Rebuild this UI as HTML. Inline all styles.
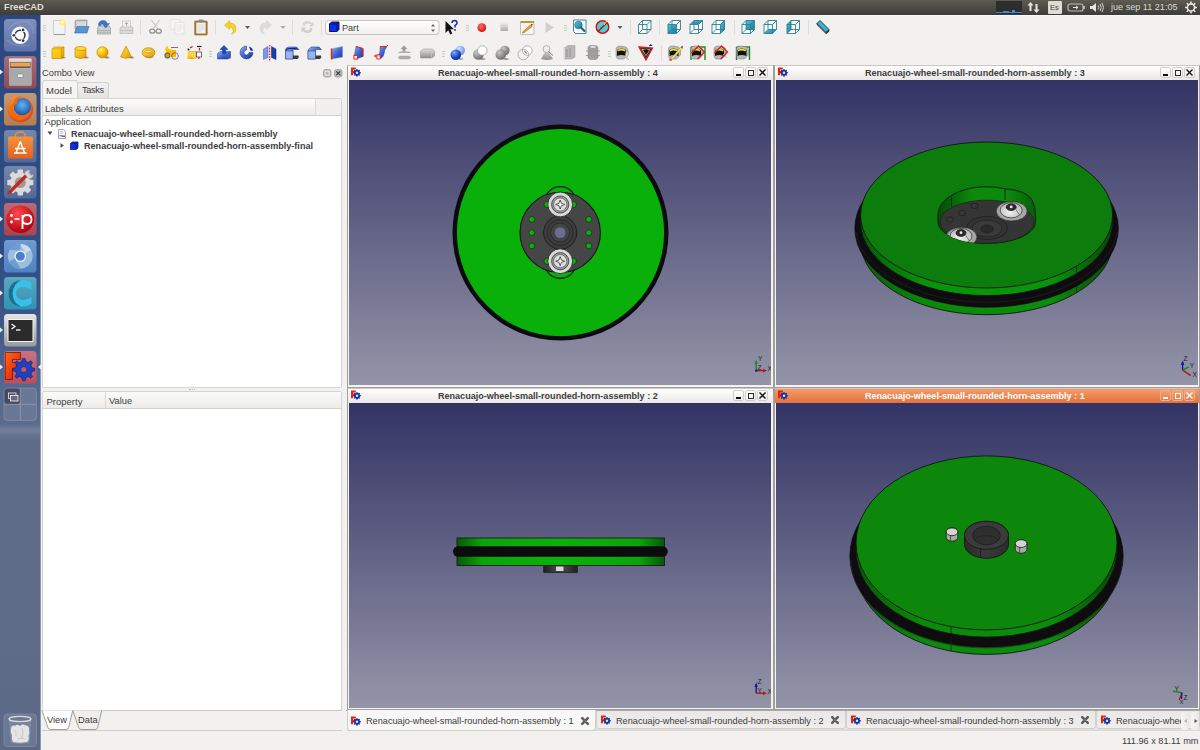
<!DOCTYPE html>
<html><head><meta charset="utf-8">
<style>
*{margin:0;padding:0;box-sizing:border-box}
html,body{width:1200px;height:750px;overflow:hidden;background:#f2f1f0;font-family:"Liberation Sans",sans-serif;color:#3c3c3c}
.a{position:absolute}
.t{position:absolute;white-space:nowrap;line-height:1}
#panel{left:0;top:0;width:1200px;height:15px;background:linear-gradient(#5e5b52,#3d3c38)}
#launcher{left:0;top:15px;width:41px;height:735px;background:linear-gradient(#2b4980 0%,#2f4d85 33%,#3d5888 42%,#526890 50%,#5f6d8b 58%,#5f6d8a 80%,#5b6986 100%)}
.vp{position:absolute;background:linear-gradient(#333365,#9494a8)}
.frame{position:absolute;background:#f4f3f2;border:1px solid #a09f9c}
.tb{position:absolute;left:0;right:0;top:0;height:14px;background:linear-gradient(#ffffff,#e9e8e6)}
.tb.act{background:linear-gradient(#f69a68,#e5713c)}
.ttl{position:absolute;top:3px;font-size:9.05px;font-weight:bold;color:#3c3c3c;white-space:nowrap;line-height:1}
.act .ttl{color:#fff}
.wb{position:absolute;top:1px;width:11px;height:11px;border:1px solid #cfcecb;border-radius:2px;background:linear-gradient(#fff,#f1f0ee)}
.act .wb{border-color:#f0b090;background:linear-gradient(#f9a070,#ea7a46)}

.gm{position:absolute;left:2px;top:6.2px;width:5px;height:1.5px;background:#111}
.gx{position:absolute;left:1.8px;top:2px;width:6px;height:5.5px;border:1.4px solid #2a2a2a}
.gc{position:absolute;left:0px;top:0.3px;color:#111}
.act .gm{background:#fff}.act .gx{border-color:#fff}.act .gc{color:#fff}
.frame{border-top-color:#c9c8c5}

</style></head>
<body>
<div id="panel" class="a">
  <div class="t" style="left:4px;top:3px;font-size:9.3px;font-weight:bold;color:#e2ded6">FreeCAD</div>
  <div class="a" style="left:996px;top:1px;width:26px;height:13px;background:#2d2d2b"></div>
  <div class="a" style="left:996px;top:12px;width:26px;height:1px;background:#3a8ae0"></div>
  <div class="a" style="left:1003px;top:11px;width:6px;height:1px;background:#3a8ae0"></div>
  <div class="a" style="left:1012px;top:10px;width:3px;height:2px;background:#3a8ae0"></div>
  <svg class="a" style="left:1026px;top:1px" width="16" height="13" viewBox="0 0 16 13">
    <path d="M4.5 1 L1.5 4.5 H3.5 V10 H5.5 V4.5 H7.5 Z" fill="#e8e5df"/>
    <path d="M10.5 12 L7.5 8.5 H9.5 V3 H11.5 V8.5 H13.5 Z" fill="#e8e5df"/>
  </svg>
  <div class="a" style="left:1048px;top:1px;width:14px;height:13px;background:#dedbd5;border-radius:1px"></div>
  <div class="t" style="left:1050px;top:4px;font-size:7.5px;color:#3c3b37">Es</div>
  <svg class="a" style="left:1067px;top:2px" width="19" height="11" viewBox="0 0 19 11">
    <rect x="1" y="2" width="15" height="7" rx="2" fill="none" stroke="#bdbab3" stroke-width="1.2"/>
    <rect x="16" y="4" width="2" height="3" fill="#bdbab3"/>
    <path d="M6 5.5 H11 M9 3.8 L11 5.5 L9 7.2" stroke="#e8e5df" stroke-width="1" fill="none"/>
  </svg>
  <svg class="a" style="left:1089px;top:1px" width="16" height="13" viewBox="0 0 16 13">
    <path d="M1 5 H3.5 L7 2 V11 L3.5 8 H1 Z" fill="#e8e5df"/>
    <path d="M9 4.5 Q10.5 6.5 9 8.5 M11 3 Q13.5 6.5 11 10 M13 1.8 Q16 6.5 13 11.2" stroke="#d8d5cf" stroke-width="1" fill="none"/>
  </svg>
  <div class="t" style="left:1111px;top:3px;font-size:9.1px;color:#dcd8d0">jue sep 11 21:05</div>
  <svg class="a" style="left:1184px;top:1px" width="14" height="13" viewBox="0 0 14 13">
    <circle cx="7" cy="6.5" r="3.6" fill="none" stroke="#e8e5df" stroke-width="1.6"/>
    <path d="M7 0.5V2.6M7 10.4V12.5M1 6.5H3.1M10.9 6.5H13M2.8 2.3L4.3 3.8M9.7 9.2L11.2 10.7M2.8 10.7L4.3 9.2M9.7 3.8L11.2 2.3" stroke="#e8e5df" stroke-width="1.6"/>
  </svg>
</div>
<div id="launcher" class="a"></div>
<div class="a" style="left:0;top:424px;width:40px;height:16px;background:linear-gradient(rgba(255,255,255,0) 0%,rgba(200,205,220,0.22) 45%,rgba(255,255,255,0.08) 60%,rgba(255,255,255,0) 100%)"></div>
<div class="a" style="left:40px;top:15px;width:1px;height:735px;background:#8f9bb3"></div>
<div class="a" style="left:41px;top:15px;width:1159px;height:1px;background:#f9f8f7"></div>

<svg class="a" style="left:0;top:15px" width="41" height="735" viewBox="0 15 41 735">
<defs>
  <linearGradient id="tileg" x1="0" y1="0" x2="0" y2="1"><stop offset="0" stop-color="#fff" stop-opacity="0.22"/><stop offset="1" stop-color="#fff" stop-opacity="0.02"/></linearGradient>
  <radialGradient id="ffx" cx="0.45" cy="0.4" r="0.6"><stop offset="0" stop-color="#ffd23a"/><stop offset="0.55" stop-color="#f58a1e"/><stop offset="1" stop-color="#d8401a"/></radialGradient>
  <radialGradient id="ffglobe" cx="0.5" cy="0.4" r="0.6"><stop offset="0" stop-color="#5fb6f0"/><stop offset="1" stop-color="#1e4fa8"/></radialGradient>
  <radialGradient id="redball" cx="0.4" cy="0.3" r="0.7"><stop offset="0" stop-color="#ff4a4a"/><stop offset="1" stop-color="#b00010"/></radialGradient>
  <linearGradient id="termg" x1="0" y1="0" x2="0" y2="1"><stop offset="0" stop-color="#e6e6e6"/><stop offset="1" stop-color="#9a9a9a"/></linearGradient>
  <linearGradient id="bagg" x1="0" y1="0" x2="0" y2="1"><stop offset="0" stop-color="#f5923e"/><stop offset="1" stop-color="#e2601e"/></linearGradient>
  <linearGradient id="fcF" x1="0" y1="0" x2="1" y2="1"><stop offset="0" stop-color="#ff6a1a"/><stop offset="1" stop-color="#d81808"/></linearGradient>
  <radialGradient id="trashg" cx="0.5" cy="0.3" r="0.7"><stop offset="0" stop-color="#fafafa"/><stop offset="1" stop-color="#b8b8b8"/></radialGradient>
</defs>
<!-- tiles -->
<g>
  <!-- 1 ubuntu -->
  <rect x="4" y="19" width="32.5" height="32.5" rx="3.5" fill="#5b70a9"/>
  <rect x="4" y="19" width="32.5" height="32.5" rx="3.5" fill="url(#tileg)"/>
  <path d="M8 30 Q14 20 28 22 Q34 26 33 33" fill="none" stroke="#8fa0cc" stroke-width="1.2" opacity="0.6"/>
  <path d="M7 40 Q15 48 30 45" fill="none" stroke="#8fa0cc" stroke-width="1.2" opacity="0.5"/>
  <circle cx="20.1" cy="35.3" r="8.7" fill="#fdfdfd"/>
  <circle cx="20" cy="35.3" r="5" fill="none" stroke="#2a3550" stroke-width="1.5"/>
  <circle cx="13.8" cy="35.3" r="2.2" fill="#fdfdfd"/><circle cx="23.1" cy="29.9" r="2.2" fill="#fdfdfd"/><circle cx="23.1" cy="40.7" r="2.2" fill="#fdfdfd"/>
  <circle cx="13.8" cy="35.3" r="1.35" fill="#2a3550"/><circle cx="23.1" cy="29.9" r="1.35" fill="#2a3550"/><circle cx="23.1" cy="40.7" r="1.35" fill="#2a3550"/>
  <!-- 2 files -->
  <rect x="4" y="56" width="32.5" height="32.5" rx="3.5" fill="#8d4556"/>
  <rect x="4" y="56" width="32.5" height="32.5" rx="3.5" fill="url(#tileg)"/>
  <rect x="9" y="58.5" width="22.5" height="27" rx="1.5" fill="#bdbdbd"/>
  <rect x="9" y="58.5" width="22.5" height="3" fill="#dcdcdc"/>
  <rect x="10" y="62" width="20.5" height="6" fill="#5a5a5a"/>
  <rect x="10.5" y="62.5" width="19.5" height="4" fill="#f0a050"/>
  <rect x="9" y="68.5" width="22.5" height="17" fill="#a9a9a9"/>
  <rect x="17.5" y="74" width="5.5" height="3.5" rx="0.5" fill="#eeeeee" stroke="#777" stroke-width="0.6"/>
  <!-- 3 firefox -->
  <rect x="4" y="93" width="32.5" height="32.5" rx="3.5" fill="#b07c52"/>
  <rect x="4" y="93" width="32.5" height="32.5" rx="3.5" fill="url(#tileg)"/>
  <circle cx="20.3" cy="109.5" r="12.8" fill="url(#ffx)"/>
  <circle cx="22.3" cy="106.8" r="8.8" fill="url(#ffglobe)"/>
  <path d="M13 103 Q15 97 21 96.5 Q16 100 17 104 Q14 104 13.5 108 Q14 114 20 115.5 Q26 116 29.5 111.5 Q28 119 20 120 Q11 119 9.5 111 Q9 106 13 103 Z" fill="#f06a14"/>
  <path d="M10 100 Q12 96 15 95.5 L14 99 Z" fill="#f89030"/>
  <!-- 4 software center -->
  <rect x="4" y="130" width="32.5" height="32.5" rx="3.5" fill="#4f6592"/>
  <rect x="4" y="130" width="32.5" height="32.5" rx="3.5" fill="url(#tileg)"/>
  <path d="M15 137 Q15 132 20.3 132 Q25.5 132 25.5 137" fill="none" stroke="#f08a3a" stroke-width="1.4"/>
  <rect x="8" y="136.5" width="25" height="22" rx="1" fill="url(#bagg)"/>
  <path d="M20.3 141.5 L16 153 M20.3 141.5 L24.6 153 M15 148.5 H25.6 M14 153 H26.6" stroke="#fff" stroke-width="1.4" fill="none"/>
  <!-- 5 settings -->
  <rect x="4" y="166" width="32.5" height="32.5" rx="3.5" fill="#4f6592"/>
  <rect x="4" y="166" width="32.5" height="32.5" rx="3.5" fill="url(#tileg)"/>
  <g transform="translate(20.3 182.5)">
    <circle r="10" fill="#dadada"/>
    <path d="M-2.5 -13 H2.5 L3 -9 H-3 Z M-2.5 13 H2.5 L3 9 H-3 Z M-13 -2.5 V2.5 L-9 3 V-3 Z M13 -2.5 V2.5 L9 3 V-3 Z" fill="#dadada"/>
    <path d="M-2.5 -13 H2.5 L3 -9 H-3 Z M-2.5 13 H2.5 L3 9 H-3 Z M-13 -2.5 V2.5 L-9 3 V-3 Z M13 -2.5 V2.5 L9 3 V-3 Z" fill="#dadada" transform="rotate(45)"/>
    <circle r="5.5" fill="#9a9a9a"/>
    <path d="M-11 10 L6 -7" stroke="#c02a20" stroke-width="3.4" stroke-linecap="round"/>
    <path d="M4 -9 Q6 -13 10 -12 L8 -9 L10 -7 L13 -8 Q13 -4 8 -4 Z" fill="#d8d8d8" stroke="#999" stroke-width="0.5"/>
  </g>
  <!-- 6 :-p -->
  <rect x="4" y="203" width="32.5" height="32.5" rx="3.5" fill="#a8404c"/>
  <rect x="4" y="203" width="32.5" height="32.5" rx="3.5" fill="url(#tileg)"/>
  <circle cx="20.3" cy="219.3" r="13.8" fill="url(#redball)"/>
  <circle cx="11.5" cy="215.5" r="1.4" fill="#fff"/><circle cx="11.5" cy="222" r="1.4" fill="#fff"/>
  <path d="M14.5 219 H19.5" stroke="#fff" stroke-width="1.6"/>
  <path d="M22.5 215 V229 M22.5 219.5 Q22.5 215 27 215 Q31.5 215 31.5 219.5 Q31.5 224 27 224 Q22.5 224 22.5 219.5" fill="none" stroke="#fff" stroke-width="1.8"/>
  <!-- 7 chromium -->
  <rect x="4" y="240" width="32.5" height="32.5" rx="3.5" fill="#4a7fc0"/>
  <rect x="4" y="240" width="32.5" height="32.5" rx="3.5" fill="url(#tileg)"/>
  <circle cx="20.3" cy="256.3" r="12.3" fill="#9dbde0"/>
  <path d="M20.3 244 A12.3 12.3 0 0 1 31 250 L25.5 253 Z" fill="#c8dcef"/>
  <path d="M9.5 250 A12.3 12.3 0 0 1 20.3 244 L20.3 250.5 Z" fill="#6e9bd0"/>
  <path d="M20.3 268.6 A12.3 12.3 0 0 1 9.3 261.5 L14.8 258.5 Z" fill="#6e9bd0"/>
  <circle cx="20.3" cy="256.3" r="5.8" fill="#eaf2fb"/>
  <circle cx="20.3" cy="256.3" r="4.5" fill="#4a80c8"/>
  <!-- 8 C -->
  <rect x="4" y="277" width="32.5" height="32.5" rx="3.5" fill="#2d8fb0"/>
  <rect x="4" y="277" width="32.5" height="32.5" rx="3.5" fill="url(#tileg)"/>
  <path d="M31.5 283 Q27 279.5 21 280 Q9 281.5 8.5 293.5 Q9 305.5 21 306.5 Q27 307 31.5 303.5 L31.5 297 Q27 300 23 300 Q16 299 16 293.5 Q16 287.5 23 287 Q27 287 31.5 290 Z" fill="#39c0ea"/>
  <path d="M21 280 Q9 281.5 8.5 293.5 Q9 305.5 21 306.5 Q13 303 12.5 293.5 Q13 284 21 280 Z" fill="#1d6f8c"/>
  <!-- 9 terminal -->
  <rect x="4" y="314" width="32.5" height="32.5" rx="3.5" fill="url(#termg)"/>
  <rect x="7.5" y="319" width="26" height="23" rx="1" fill="#f4f4f4"/>
  <rect x="8.5" y="320" width="24" height="21" fill="#2a2a2a"/>
  <path d="M11.5 324 L15 326.5 L11.5 329" fill="none" stroke="#fff" stroke-width="1.3"/>
  <path d="M16 330 H20.5" stroke="#fff" stroke-width="1.3"/>
  <!-- 10 freecad -->
  <rect x="4" y="351" width="32.5" height="32.5" rx="3.5" fill="#bb4a5a"/>
  <rect x="4" y="351" width="32.5" height="32.5" rx="3.5" fill="url(#tileg)"/>
  <path d="M5.3 352.5 H20.5 V359.5 H12.5 V362.5 H17 V368.5 H12.5 V379.5 H5.3 Z" fill="url(#fcF)" stroke="#601000" stroke-width="0.7"/>
  <g transform="translate(23.8 369.5) scale(0.84)">
    <path d="M-1.6 -11.5 H1.6 L2.3 -8 L5.3 -6.5 L8.3 -8.7 L10.5 -6.5 L8.5 -3.6 L9.6 -0.5 L13 0.2 V3.3 L9.6 4 L8.5 7 L10.5 10 L8.3 12.2 L5.3 10 L2.3 11.5 L1.6 15 H-1.6 L-2.3 11.5 L-5.3 10 L-8.3 12.2 L-10.5 10 L-8.5 7 L-9.6 4 L-13 3.3 V0.2 L-9.6 -0.5 L-8.5 -3.6 L-10.5 -6.5 L-8.3 -8.7 L-5.3 -6.5 L-2.3 -8 Z" fill="#2040c0" stroke="#0c1a70" stroke-width="0.7" transform="translate(0 -1.7)"/>
    <circle cx="0" cy="0" r="3.6" fill="#bd5a66" stroke="#0c1a70" stroke-width="0.6"/>
  </g>
  <!-- 11 workspaces -->
  <rect x="4" y="388" width="32.5" height="32.5" rx="3.5" fill="#6a7896" stroke="#8895b0" stroke-width="0.6"/>
  <rect x="4.5" y="388.5" width="15.5" height="15.5" rx="3" fill="#4a4860"/>
  <path d="M20.3 388.5 V420.5 M4.5 404.3 H36" stroke="#8e9ab4" stroke-width="0.8"/>
  <rect x="8.5" y="393" width="7.5" height="5.5" fill="none" stroke="#ddd" stroke-width="0.9"/>
  <rect x="10.5" y="395.5" width="7.5" height="5.5" fill="#6a6880" stroke="#eee" stroke-width="0.9"/>
  <!-- trash -->
  <rect x="4" y="714" width="32.5" height="32.5" rx="3.5" fill="#ffffff" fill-opacity="0.1" stroke="#8c96ae" stroke-width="0.6"/>
  <path d="M9.5 720 L11.5 742.5 Q20 744.5 29 742.5 L30.5 720" fill="#ffffff" fill-opacity="0.08" stroke="#9aa2b4" stroke-width="0.5"/>
  <ellipse cx="20" cy="719" rx="11" ry="2.6" fill="none" stroke="#dcdcdc" stroke-width="1.3"/>
  <path d="M11 728 Q12 724.5 15 726 Q17 723.5 20 726 Q23 723.5 25.5 725.5 Q29 725 29 729 Q30 733 28.5 736 Q29.5 740 27 742 Q20 743.5 13 742 Q11 739 12 735.5 Q10 732 11 728 Z" fill="#e4e4e4"/>
  <path d="M14 730 Q17 732 16 736 M22 728 Q24 733 22 738 M18 739 Q21 737 25 739" stroke="#bdbdbd" stroke-width="0.7" fill="none"/>
</g>
<!-- pips -->
<g fill="#eeeeee">
  <path d="M0 69.5 L3 72 L0 74.5 Z"/>
  <path d="M0 106.5 L3 109 L0 111.5 Z"/>
  <path d="M0 216.5 L3 219 L0 221.5 Z"/>
  <path d="M0 253.5 L3 256 L0 258.5 Z"/>
  <path d="M0 290.5 L3 293 L0 295.5 Z"/>
  <path d="M0 327.5 L3 330 L0 332.5 Z"/>
  <path d="M0 364.5 L3 367 L0 369.5 Z"/>
  <path d="M41 364.5 L38 367 L41 369.5 Z"/>
</g>
</svg>

<svg class="a" style="left:0;top:0" width="900" height="65" viewBox="0 0 900 65"><defs>
<linearGradient id="ygold" x1="0" y1="0" x2="1" y2="1"><stop offset="0" stop-color="#ffe23a"/><stop offset="1" stop-color="#e89a00"/></linearGradient>
<radialGradient id="ysph" cx="0.35" cy="0.3" r="0.75"><stop offset="0" stop-color="#fff36a"/><stop offset="0.5" stop-color="#ffc400"/><stop offset="1" stop-color="#d88a00"/></radialGradient>
<linearGradient id="bblue" x1="0" y1="0" x2="1" y2="1"><stop offset="0" stop-color="#9ab4f0"/><stop offset="0.5" stop-color="#3f66d0"/><stop offset="1" stop-color="#1a3496"/></linearGradient>
<radialGradient id="bsph" cx="0.35" cy="0.3" r="0.75"><stop offset="0" stop-color="#7ab0ff"/><stop offset="0.6" stop-color="#1a4ec8"/><stop offset="1" stop-color="#0a2680"/></radialGradient>
<radialGradient id="lbsph" cx="0.35" cy="0.3" r="0.75"><stop offset="0" stop-color="#d0e0ff"/><stop offset="1" stop-color="#6a8ae0"/></radialGradient>
<radialGradient id="gsph" cx="0.35" cy="0.3" r="0.75"><stop offset="0" stop-color="#c8c8c8"/><stop offset="1" stop-color="#6a6a6a"/></radialGradient>
<linearGradient id="ggray" x1="0" y1="0" x2="0" y2="1"><stop offset="0" stop-color="#e0e0e0"/><stop offset="1" stop-color="#8e8e8e"/></linearGradient>
<linearGradient id="teal" x1="0" y1="0" x2="1" y2="1"><stop offset="0" stop-color="#5ac0e0"/><stop offset="1" stop-color="#137a98"/></linearGradient>
<radialGradient id="redb" cx="0.4" cy="0.35" r="0.7"><stop offset="0" stop-color="#ff6a6a"/><stop offset="1" stop-color="#d80a0a"/></radialGradient>
<radialGradient id="shadow" cx="0.5" cy="0.5" r="0.5"><stop offset="0" stop-color="#000" stop-opacity="0.55"/><stop offset="1" stop-color="#000" stop-opacity="0"/></radialGradient>
<linearGradient id="combog" x1="0" y1="0" x2="0" y2="1"><stop offset="0" stop-color="#ffffff"/><stop offset="1" stop-color="#f0efed"/></linearGradient></defs><path d="M43 25.5h3M43 28h3M43 30.5h3" stroke="#c4c3c0" stroke-width="0.9"/><g transform="translate(52.5 19)"><path d="M1 1.5 H10 L12.5 4 V15.5 H1 Z" fill="#f3f3f3" stroke="#c4c4c4" stroke-width="0.8"/><path d="M1.5 15.5 H12.5" stroke="#9a9a9a" stroke-width="1"/><circle cx="10" cy="3.3" r="3" fill="#fff64a" opacity="0.9"/><circle cx="10" cy="3.3" r="1.3" fill="#fffde0"/></g><g transform="translate(73.5 19)"><path d="M1.5 3 Q1.5 1 3.5 1 H13.5 V10 H1.5 Z" fill="#b8b8b8" stroke="#8a8a8a" stroke-width="0.6"/><path d="M3 2.5 H12.5 V9 H3 Z" fill="#e2e2e2"/><path d="M4 4 H12 M4 6 H12" stroke="#c8c8c8" stroke-width="0.7"/><path d="M3.5 7.5 H15.5 L13.5 14 H1 Z" fill="#5a92d6" stroke="#3a68b0" stroke-width="0.6"/></g><g transform="translate(96.5 19)"><path d="M1 9 L2.5 7 H12.5 L14 9 V15 H1 Z" fill="#cfcfcf" stroke="#8a8a8a" stroke-width="0.6"/><path d="M1 11.5 H14 M1 13.3 H14" stroke="#a8a8a8" stroke-width="0.7"/><path d="M2 6.5 Q2 1.5 7 1.5 Q10 1.5 10.5 4.5 H13 L9.2 9 L5.5 4.5 H7.8 Q7.5 3.8 6.5 3.9 Q4.5 4.1 4.5 6.5 Z" fill="#3a78c8" stroke="#2a5aa0" stroke-width="0.5"/></g><g transform="translate(119 19)"><path d="M1 9 L3 7 H12 L14 9 V14.5 H1 Z" fill="#dadada" stroke="#b0b0b0" stroke-width="0.6"/><rect x="3.5" y="2" width="8" height="6" fill="#f0f0f0" stroke="#b8b8b8" stroke-width="0.6"/><path d="M7.5 3.5 V7 M6 5 L7.5 3.5 L9 5" stroke="#9a9a9a" stroke-width="0.8" fill="none"/><path d="M1 11.5 H14" stroke="#b8b8b8" stroke-width="0.8"/></g><rect x="140" y="20" width="1" height="15" fill="#dedddb"/><g transform="translate(148.5 19)"><path d="M3 1 L9.5 10 M11 1 L4.5 10" stroke="#c8c8c8" stroke-width="1.2"/><ellipse cx="3.8" cy="12.2" rx="2.6" ry="2" fill="none" stroke="#909090" stroke-width="1.3"/><ellipse cx="10.2" cy="12.2" rx="2.6" ry="2" fill="none" stroke="#909090" stroke-width="1.3"/></g><g transform="translate(170.5 19)"><rect x="0.5" y="0.5" width="9" height="10" fill="#f6f6f6" stroke="#dcdcdc" stroke-width="0.7"/><path d="M4.5 3.5 H13.5 V15 H4.5 Z" fill="#f8f8f8" stroke="#d8d8d8" stroke-width="0.7"/><path d="M6 6 H12 M6 8 H12 M6 10 H12 M6 12 H10" stroke="#e0e0e0" stroke-width="0.8"/></g><g transform="translate(194 19)"><rect x="0.7" y="2" width="12.5" height="14" rx="0.8" fill="#b07830" stroke="#8a5a1e" stroke-width="0.6"/><rect x="2.3" y="3.5" width="9.3" height="11" fill="#f2f2f2"/><path d="M3.5 6H10.5M3.5 8H10.5M3.5 10H10.5M3.5 12H8" stroke="#cfcfcf" stroke-width="0.7"/><rect x="4.5" y="0.5" width="5" height="3" rx="1" fill="#8a8a8a"/></g><rect x="215" y="20" width="1" height="15" fill="#dedddb"/><g transform="translate(223.5 19)"><path d="M1 6 L6 1.5 V4 Q12.5 4 12.5 9.5 Q12.5 14 8 15 Q10.5 12.5 9.5 10 Q8.5 8 6 8 V10.5 Z" fill="#f4d22a" stroke="#d8a800" stroke-width="0.5"/></g><path d="M245.0 26 h5 l-2.5 3 z" fill="#5a5a5a"/><g transform="translate(259.5 19)"><path d="M12 6 L7 1.5 V4 Q0.5 4 0.5 9.5 Q0.5 14 5 15 Q2.5 12.5 3.5 10 Q4.5 8 7 8 V10.5 Z" fill="#dcdcdc" stroke="#d0d0d0" stroke-width="0.5"/></g><path d="M280.5 26 h5 l-2.5 3 z" fill="#a8a8a8"/><rect x="292" y="20" width="1" height="15" fill="#dedddb"/><g transform="translate(300.5 19)"><path d="M2 7 Q2 2 7 2 Q10 2 11.5 4 L13 2.5 V7.5 H8 L10 5.8 Q9 4.5 7 4.5 Q4.5 4.5 4.5 7 Z" fill="#d6d6d6"/><path d="M12 9 Q12 14 7 14 Q4 14 2.5 12 L1 13.5 V8.5 H6 L4 10.2 Q5 11.5 7 11.5 Q9.5 11.5 9.5 9 Z" fill="#cdcdcd"/></g><rect x="321" y="20" width="1" height="15" fill="#dedddb"/><rect x="325.5" y="20.5" width="113.5" height="14" rx="3" fill="url(#combog)" stroke="#c5c4c1" stroke-width="1"/><g transform="translate(329 21.5)"><path d="M0.5 2.5 L2.5 0.5 H10 V8 L8 10 H0.5 Z" fill="#0a2cf0" stroke="#020a40" stroke-width="0.9"/><path d="M0.5 2.5 H8 V10 M8 2.5 L10 0.5" stroke="#020a40" stroke-width="0.8" fill="none"/></g><path d="M431 26.5 L433 24 L435 26.5 Z M431 29.5 L433 32 L435 29.5 Z" fill="#666"/><g transform="translate(445 19)"><path d="M0.5 2 V14 L3.3 11.2 L5.3 15.5 L7.3 14.5 L5.3 10.3 H9 Z" fill="#111"/><path d="M7 4 Q7 1.5 9.5 1.5 Q12 1.5 12 4 Q12 5.5 10 6.5 V8.5" fill="none" stroke="#1a2ab0" stroke-width="1.5"/><circle cx="10" cy="11" r="0.9" fill="#1a2ab0"/></g><path d="M466 25.5h3M466 28h3M466 30.5h3" stroke="#c4c3c0" stroke-width="0.9"/><circle cx="481.8" cy="27.7" r="4.4" fill="url(#redb)"/><rect x="500.5" y="23.5" width="7.5" height="7.5" fill="url(#ggray)" opacity="0.7"/><g transform="translate(520 19)"><rect x="0.5" y="3" width="13.5" height="12.5" rx="0.8" fill="#f6f6f4" stroke="#a8a8a8" stroke-width="0.7"/><rect x="0.5" y="2" width="13.5" height="2" fill="#b89a30"/><path d="M3 12.5 L10.5 6 L12 7.5 L4.5 13.5 L2.5 14 Z" fill="#f0a030" stroke="#8a5a10" stroke-width="0.5"/><circle cx="11.8" cy="5.8" r="1" fill="#e02020"/></g><path d="M545.5 22 L554 27.5 L545.5 33 Z" fill="#cfcfcf"/><path d="M564 25.5h3M564 28h3M564 30.5h3" stroke="#c4c3c0" stroke-width="0.9"/><g transform="translate(572.5 19)"><path d="M1 1 H13.5 V14.5 H3 L1 12.5 Z" fill="#f8f8f8" stroke="#3a7a90" stroke-width="0.9"/><circle cx="6" cy="6" r="3.8" fill="url(#teal)" stroke="#1a5a70" stroke-width="0.5"/><path d="M8.5 8.5 L12 12" stroke="#1e6a80" stroke-width="2.2" stroke-linecap="round"/></g><g transform="translate(595 19)"><circle cx="7.5" cy="8" r="5.3" fill="#40d0e0"/><circle cx="7.5" cy="8" r="6.2" fill="none" stroke="#c01010" stroke-width="1.5"/><path d="M3.2 12.3 L11.8 3.7" stroke="#c01010" stroke-width="1.5"/><path d="M9 6 L12.5 1" stroke="#f0e030" stroke-width="1"/></g><path d="M617.5 26 h5 l-2.5 3 z" fill="#5a5a5a"/><rect x="630" y="20" width="1" height="15" fill="#dedddb"/><g transform="translate(637 19)"><polygon points="1.5,5.5 5.5,1.5 14,1.5 14,10.5 10,14.5 1.5,14.5" fill="#fbfdfd"/><path d="M1.5,5.5L10,5.5M10,5.5L10,14.5M10,14.5L1.5,14.5M1.5,14.5L1.5,5.5M5.5,1.5L14,1.5M14,1.5L14,10.5M14,10.5L5.5,10.5M5.5,10.5L5.5,1.5M1.5,5.5L5.5,1.5M10,5.5L14,1.5M10,14.5L14,10.5M1.5,14.5L5.5,10.5" stroke="#2e7f92" stroke-width="0.9" fill="none"/></g><rect x="659" y="20" width="1" height="15" fill="#dedddb"/><g transform="translate(666.5 19)"><polygon points="1.5,5.5 5.5,1.5 14,1.5 14,10.5 10,14.5 1.5,14.5" fill="#fbfdfd"/><polygon points="1.5,5.5 10,5.5 10,14.5 1.5,14.5" fill="url(#teal)"/><path d="M1.5,5.5L10,5.5M10,5.5L10,14.5M10,14.5L1.5,14.5M1.5,14.5L1.5,5.5M5.5,1.5L14,1.5M14,1.5L14,10.5M14,10.5L5.5,10.5M5.5,10.5L5.5,1.5M1.5,5.5L5.5,1.5M10,5.5L14,1.5M10,14.5L14,10.5M1.5,14.5L5.5,10.5" stroke="#2e7f92" stroke-width="0.9" fill="none"/></g><g transform="translate(688.5 19)"><polygon points="1.5,5.5 5.5,1.5 14,1.5 14,10.5 10,14.5 1.5,14.5" fill="#fbfdfd"/><polygon points="1.5,5.5 10,5.5 14,1.5 5.5,1.5" fill="url(#teal)"/><path d="M1.5,5.5L10,5.5M10,5.5L10,14.5M10,14.5L1.5,14.5M1.5,14.5L1.5,5.5M5.5,1.5L14,1.5M14,1.5L14,10.5M14,10.5L5.5,10.5M5.5,10.5L5.5,1.5M1.5,5.5L5.5,1.5M10,5.5L14,1.5M10,14.5L14,10.5M1.5,14.5L5.5,10.5" stroke="#2e7f92" stroke-width="0.9" fill="none"/></g><g transform="translate(710.5 19)"><polygon points="1.5,5.5 5.5,1.5 14,1.5 14,10.5 10,14.5 1.5,14.5" fill="#fbfdfd"/><polygon points="10,5.5 14,1.5 14,10.5 10,14.5" fill="url(#teal)"/><path d="M1.5,5.5L10,5.5M10,5.5L10,14.5M10,14.5L1.5,14.5M1.5,14.5L1.5,5.5M5.5,1.5L14,1.5M14,1.5L14,10.5M14,10.5L5.5,10.5M5.5,10.5L5.5,1.5M1.5,5.5L5.5,1.5M10,5.5L14,1.5M10,14.5L14,10.5M1.5,14.5L5.5,10.5" stroke="#2e7f92" stroke-width="0.9" fill="none"/></g><rect x="734" y="20" width="1" height="15" fill="#dedddb"/><g transform="translate(740.5 19)"><polygon points="1.5,5.5 5.5,1.5 14,1.5 14,10.5 10,14.5 1.5,14.5" fill="#fbfdfd"/><polygon points="5.5,1.5 14,1.5 14,10.5 5.5,10.5" fill="url(#teal)"/><path d="M1.5,5.5L10,5.5M10,5.5L10,14.5M10,14.5L1.5,14.5M1.5,14.5L1.5,5.5M5.5,1.5L14,1.5M14,1.5L14,10.5M14,10.5L5.5,10.5M5.5,10.5L5.5,1.5M1.5,5.5L5.5,1.5M10,5.5L14,1.5M10,14.5L14,10.5M1.5,14.5L5.5,10.5" stroke="#2e7f92" stroke-width="0.9" fill="none"/></g><g transform="translate(762.5 19)"><polygon points="1.5,5.5 5.5,1.5 14,1.5 14,10.5 10,14.5 1.5,14.5" fill="#fbfdfd"/><polygon points="1.5,14.5 10,14.5 14,10.5 5.5,10.5" fill="url(#teal)"/><path d="M1.5,5.5L10,5.5M10,5.5L10,14.5M10,14.5L1.5,14.5M1.5,14.5L1.5,5.5M5.5,1.5L14,1.5M14,1.5L14,10.5M14,10.5L5.5,10.5M5.5,10.5L5.5,1.5M1.5,5.5L5.5,1.5M10,5.5L14,1.5M10,14.5L14,10.5M1.5,14.5L5.5,10.5" stroke="#2e7f92" stroke-width="0.9" fill="none"/></g><g transform="translate(785.5 19)"><polygon points="1.5,5.5 5.5,1.5 14,1.5 14,10.5 10,14.5 1.5,14.5" fill="#fbfdfd"/><polygon points="1.5,5.5 5.5,1.5 5.5,10.5 1.5,14.5" fill="url(#teal)"/><path d="M1.5,5.5L10,5.5M10,5.5L10,14.5M10,14.5L1.5,14.5M1.5,14.5L1.5,5.5M5.5,1.5L14,1.5M14,1.5L14,10.5M14,10.5L5.5,10.5M5.5,10.5L5.5,1.5M1.5,5.5L5.5,1.5M10,5.5L14,1.5M10,14.5L14,10.5M1.5,14.5L5.5,10.5" stroke="#2e7f92" stroke-width="0.9" fill="none"/></g><rect x="808" y="20" width="1" height="15" fill="#dedddb"/><g transform="translate(815 19)"><path d="M2 4.5 L5 1.5 L14 10.5 L11 13.5 Z" fill="#3cb0d8" stroke="#1a2a30" stroke-width="0.9"/><path d="M11 13.5 L11.5 15 L14.5 12 L14 10.5" fill="#222"/><path d="M2 4.5 L2.5 6 L11.5 15" fill="none" stroke="#222" stroke-width="1"/></g><path d="M43 51.5h3M43 54h3M43 56.5h3" stroke="#c4c3c0" stroke-width="0.9"/><g transform="translate(51 45)"><ellipse cx="12" cy="12.5" rx="3.5" ry="1.6" fill="url(#shadow)"/><path d="M1 4 L3.5 2 H13 V11 L10.5 13.5 H1 Z" fill="url(#ygold)" stroke="#b87800" stroke-width="0.6"/><path d="M1 4 H10.5 V13.5 M10.5 4 L13 2" fill="none" stroke="#c88a00" stroke-width="0.6"/><path d="M1.5 4 H10 V13 H1.5Z" fill="#ffd000" opacity="0.6"/></g><g transform="translate(74 45)"><ellipse cx="12" cy="12.5" rx="3.5" ry="1.6" fill="url(#shadow)"/><path d="M1 3.5 V12 Q6.5 15 12 12 V3.5 Z" fill="url(#ygold)" stroke="#b87800" stroke-width="0.6"/><ellipse cx="6.5" cy="3.5" rx="5.5" ry="2" fill="#ffdc30" stroke="#b87800" stroke-width="0.6"/></g><g transform="translate(95.5 45)"><ellipse cx="11.5" cy="12.5" rx="3.5" ry="1.6" fill="url(#shadow)"/><circle cx="7" cy="7.3" r="5.6" fill="url(#ysph)" stroke="#c08000" stroke-width="0.6"/></g><g transform="translate(119 45)"><ellipse cx="12.5" cy="12.5" rx="3.5" ry="1.6" fill="url(#shadow)"/><path d="M7 1 L1.5 12 Q7 14.5 12.5 12 Z" fill="url(#ygold)" stroke="#b87800" stroke-width="0.6"/></g><g transform="translate(141.5 45)"><ellipse cx="8" cy="12" rx="5.5" ry="1.8" fill="url(#shadow)"/><ellipse cx="7" cy="7.5" rx="6.5" ry="4.8" fill="url(#ygold)" stroke="#b07000" stroke-width="0.6"/><ellipse cx="6.5" cy="6.5" rx="3" ry="1.2" fill="#f6f2e0" stroke="#b07000" stroke-width="0.5"/></g><g transform="translate(164 45)"><path d="M3 0.5 L0.5 5 H5.5 Z" fill="#ffcc00"/><rect x="2" y="4.5" width="6" height="5" fill="#ffc000"/><circle cx="3.5" cy="10.5" r="3" fill="#5a5a30" stroke="#888" stroke-width="0.4"/><circle cx="3.5" cy="10.5" r="2" fill="#c8a030"/><rect x="6" y="5" width="6" height="7" fill="#ffb800"/><circle cx="11" cy="11" r="3.3" fill="none" stroke="#5a5aa0" stroke-width="0.8"/><path d="M7 2.5 H14" stroke="#555" stroke-width="0.8"/></g><g transform="translate(186.5 45)"><path d="M1 8 H8 V14 H1 Z" fill="url(#ygold)"/><path d="M1 8 L3 6.5 H9.5 V13 L8 14" fill="#ffd848" stroke="#c89000" stroke-width="0.5"/><rect x="10" y="7" width="5" height="5" fill="#fafafa" stroke="#333" stroke-width="0.7"/><path d="M10.5 1.5 H15" stroke="#111" stroke-width="1.1"/><circle cx="2" cy="4.5" r="1" fill="#111"/><path d="M3.5 3 L6 1.5 M13 3 V5.5 M11.5 13.5 L13.5 12.5" stroke="#e01010" stroke-width="1.2"/></g><path d="M209 51.5h3M209 54h3M209 56.5h3" stroke="#c4c3c0" stroke-width="0.9"/><g transform="translate(216.5 45)"><ellipse cx="12.5" cy="13" rx="3" ry="1.4" fill="url(#shadow)"/><path d="M1 8.5 L3.5 6.5 H14 V12 L11.5 14 H1 Z" fill="url(#bblue)" stroke="#2a3a90" stroke-width="0.5"/><path d="M1 8.5 H11.5 V14" stroke="#6a88d8" stroke-width="0.5" fill="none"/><path d="M7.5 0.5 L11.5 4.5 H9 V8.5 H6 V4.5 H3.5 Z" fill="#1a4ac8" stroke="#0a2a80" stroke-width="0.5"/></g><g transform="translate(239.5 45)"><path d="M7 1 A6.5 6.5 0 1 0 13.5 7.5 H9.5 A2.5 2.5 0 1 1 7 5 Z" fill="url(#bblue)" stroke="#1a2a80" stroke-width="0.5"/><path d="M9.5 1.5 Q13 2.5 13.5 6 L11 5.5 Z" fill="#0a2a90"/><circle cx="7" cy="7.5" r="1.2" fill="#fff"/></g><g transform="translate(262.5 45)"><path d="M1 4 L5.5 1.5 V12.5 L1 14.5 Z" fill="#7a9ae8" stroke="#3a5ab8" stroke-width="0.5"/><path d="M13.5 4 L9 1.5 V12.5 L13.5 14.5 Z" fill="#1a3ea8" stroke="#0a2a80" stroke-width="0.5"/><path d="M7.2 0 V16" stroke="#ff1010" stroke-width="1.2" stroke-dasharray="1.6 1.2"/></g><g transform="translate(284.5 45)"><path d="M8 10.5 H14 Q15 12.5 13 14 H8 Z" fill="#3a3a3a"/><path d="M1 5.5 Q1 2 4.5 2 H12 L14.5 4.5 H9 Q8.5 4.5 8.5 6 V14 H1 Z" fill="url(#bblue)" stroke="#1a2a80" stroke-width="0.5"/><path d="M1 6 H8.5 V14 H1 Z" fill="#9ab4ec" stroke="#2a3a90" stroke-width="0.5"/><path d="M1 5.5 Q1 3 4.5 3 H12 L13 4 H4.5 Q2.5 4 1.5 6Z" fill="#0a2a90"/></g><g transform="translate(307 45)"><path d="M8 10.5 H14 Q15 12.5 13 14 H8 Z" fill="#3a3a3a"/><path d="M1 5 L4 2 H12 L14.5 4.5 H9 L8.5 6 V14 H1 Z" fill="url(#bblue)" stroke="#1a2a80" stroke-width="0.5"/><path d="M1 6 H8.5 V14 H1 Z" fill="#9ab4ec" stroke="#2a3a90" stroke-width="0.5"/></g><g transform="translate(330 45)"><path d="M1.5 4 L12.5 1.5 V12 L1.5 14 Z" fill="url(#bblue)" stroke="#6a8ad8" stroke-width="0.5"/><path d="M1.5 3.5 V14.5" stroke="#ff1818" stroke-width="1.4"/></g><g transform="translate(353 45)"><path d="M3 1.5 L10 3.5 V11.5 L3 14 L1 12 Z" fill="url(#bblue)" stroke="#1a2a80" stroke-width="0.4"/><path d="M3 1.5 L10 3.5 V11.5" fill="none" stroke="#ff1818" stroke-width="1"/><rect x="1" y="10.5" width="3.5" height="3.5" fill="#fff" stroke="#ff1818" stroke-width="1"/></g><g transform="translate(374 45)"><path d="M6 1.5 H13 Q10 5 10 9 Q9 14 3 14 V10 Q6 10 6 6 Z" fill="url(#bblue)" stroke="#1a2a80" stroke-width="0.4"/><path d="M6 1.5 H12.5 L14 0" stroke="#ff1818" stroke-width="1" fill="none"/><path d="M0.5 11 H4.5 M2 9.5 L0.5 11 L2 12.5" stroke="#ff1818" stroke-width="1" fill="none"/><rect x="3" y="10" width="3" height="4" fill="#fff" stroke="#ff1818" stroke-width="0.8"/></g><g transform="translate(397 45)"><path d="M7 0.5 L10.5 4 H8.5 V6.5 H5.5 V4 H3.5 Z" fill="#9a9a9a"/><path d="M1 8 L3 6.5 H12 L14 8 Z" fill="#a8a8a8"/><path d="M1 12.5 L3 11 H12 L14 12.5 L12 14 H3 Z" fill="#b0b0b0" stroke="#8a8a8a" stroke-width="0.4"/></g><g transform="translate(419.5 45)"><path d="M1 6 L4 4 H13 L15 6 V11 L12 13 H1 Z" fill="url(#ggray)" stroke="#8a8a8a" stroke-width="0.5"/><path d="M1 6.5 H12 V13" stroke="#c8c8c8" stroke-width="0.6" fill="none"/></g><path d="M442 51.5h3M442 54h3M442 56.5h3" stroke="#c4c3c0" stroke-width="0.9"/><g transform="translate(450 45)"><ellipse cx="11" cy="14" rx="3" ry="1.3" fill="url(#shadow)"/><circle cx="10.2" cy="5.5" r="4.8" fill="url(#lbsph)"/><circle cx="5.8" cy="9.8" r="5.3" fill="url(#bsph)"/></g><g transform="translate(472.5 45)"><ellipse cx="10" cy="14" rx="4" ry="1.4" fill="url(#shadow)"/><circle cx="5.8" cy="9.5" r="5.3" fill="url(#gsph)"/><circle cx="9.8" cy="5.5" r="4.8" fill="#fff" stroke="#888" stroke-width="0.6"/></g><g transform="translate(495 45)"><ellipse cx="11" cy="14" rx="4" ry="1.4" fill="url(#shadow)"/><circle cx="9.8" cy="5.5" r="4.8" fill="url(#gsph)"/><circle cx="5.8" cy="9.5" r="5.3" fill="url(#gsph)"/></g><g transform="translate(517.5 45)"><circle cx="9.8" cy="5.5" r="4.8" fill="#fff" stroke="#888" stroke-width="0.6"/><circle cx="5.8" cy="9.5" r="5.3" fill="none" stroke="#888" stroke-width="0.6"/><path d="M6 5 Q9 6.5 10 9 Q7 8 6 5Z" fill="#777"/></g><g transform="translate(540 45)"><path d="M6.5 4 L1 14 Q7 16 13 14 Z" fill="url(#ggray)"/><circle cx="6.5" cy="4" r="3.5" fill="#eee" stroke="#999" stroke-width="0.7"/><path d="M8.5 6.5 L13 10.5" stroke="#777" stroke-width="1"/></g><g transform="translate(563 45)"><path d="M2 2.5 L5 0.5 H12 V12 L9 14 H2 Z" fill="#b8b8b8" stroke="#9a9a9a" stroke-width="0.5"/><path d="M4 4 V12 M7 3 V12" stroke="#8a8a8a" stroke-width="0.8"/><rect x="0.5" y="2" width="1.5" height="13" fill="#d8d8d8"/></g><g transform="translate(585 45)"><path d="M3 2 L5 0.5 H11 L13 2 V13 L11 14.5 H5 L3 13 Z" fill="#a0a0a0" stroke="#8a8a8a" stroke-width="0.5"/><path d="M1 6 H15 M1 10.5 H15" stroke="#9a9a9a" stroke-width="1.2"/><ellipse cx="8" cy="2" rx="3" ry="1" fill="#e0e0e0"/></g><path d="M608 51.5h3M608 54h3M608 56.5h3" stroke="#c4c3c0" stroke-width="0.9"/><g transform="translate(615 45)"><path d="M1 3 Q2 0.5 6 1 L11 2 Q13 3 13 6 V10 L9 14 H3 Q1 13 1 10 Z" fill="#b8b8b8" stroke="#7a7a7a" stroke-width="0.5"/><path d="M2 5 Q6 2 11 5 V11 Q6 9 2 11 Z" fill="#111"/><path d="M2.5 5 Q6 2.5 10.5 5 L10 6.5 Q6 4.5 2.5 6.5 Z" fill="#f0e020"/><path d="M11 6 L14 7.5 L12 13 L10 12 Z" fill="#d8d8d8" stroke="#888" stroke-width="0.4"/><path d="M10 12 L14 15" stroke="#c8b860" stroke-width="0.9"/></g><g transform="translate(638 45)"><path d="M1 2 L14.5 3 L8 15 Z" fill="#2a3a60" stroke="#e01818" stroke-width="1.3"/><path d="M3.5 4 L12 4.5 L8 11 Z" fill="#f0e020"/><path d="M5 5 Q8 3.5 11 5.5 L8 10 Z" fill="#111"/><path d="M11 1 L13 -0.5 L14 1" stroke="#1a3ac0" stroke-width="1"/></g><rect x="661" y="46" width="1" height="15" fill="#dedddb"/><g transform="translate(667.5 45)"><path d="M1 3 Q2 0.5 6 1 L11 2 Q13 3 13 6 V10 L9 14 H3 Q1 13 1 10 Z" fill="#b8b8b8" stroke="#7a7a7a" stroke-width="0.5"/><path d="M2 5 Q6 2 11 5 V11 Q6 9 2 11 Z" fill="#111"/><path d="M2.5 5 Q6 2.5 10.5 5 L10 6.5 Q6 4.5 2.5 6.5 Z" fill="#f0e020"/><path d="M2.5 14.5 L13.5 2 L15 3.5 L4 15.5 Z" fill="#f0e080" stroke="#a09030" stroke-width="0.5"/><circle cx="3" cy="14.8" r="1.3" fill="#d05050"/><path d="M13.5 2 L15 0.5 L15 3.5Z" fill="#111"/></g><g transform="translate(690 45)"><path d="M1 2 V15 M1 2 H15 V15" stroke="#1a8a1a" stroke-width="1.4" fill="none"/><path d="M1 3 Q2 0.5 6 1 L11 2 Q13 3 13 6 V10 L9 14 H3 Q1 13 1 10 Z" fill="#b8b8b8" stroke="#7a7a7a" stroke-width="0.5"/><path d="M2 5 Q6 2 11 5 V11 Q6 9 2 11 Z" fill="#111"/><path d="M2.5 5 Q6 2.5 10.5 5 L10 6.5 Q6 4.5 2.5 6.5 Z" fill="#f0e020"/><path d="M1.5 8 L8.5 1 L14.5 7 L7.5 14" fill="none" stroke="#d82020" stroke-width="1.3"/></g><g transform="translate(713 45)"><path d="M1 3 Q2 0.5 6 1 L11 2 Q13 3 13 6 V10 L9 14 H3 Q1 13 1 10 Z" fill="#b8b8b8" stroke="#7a7a7a" stroke-width="0.5"/><path d="M2 5 Q6 2 11 5 V11 Q6 9 2 11 Z" fill="#111"/><path d="M2.5 5 Q6 2.5 10.5 5 L10 6.5 Q6 4.5 2.5 6.5 Z" fill="#f0e020"/><path d="M10 9 L14 13" stroke="#c8b860" stroke-width="0.9"/><path d="M1.5 8 L8.5 1 L14.5 7 L7.5 14" fill="none" stroke="#d82020" stroke-width="1.3"/></g><g transform="translate(735.5 45)"><path d="M1 2 V15 M1 2 H14 V15" stroke="#1a8a1a" stroke-width="1.4" fill="none"/><path d="M1 3 Q2 0.5 6 1 L11 2 Q13 3 13 6 V10 L9 14 H3 Q1 13 1 10 Z" fill="#b8b8b8" stroke="#7a7a7a" stroke-width="0.5"/><path d="M2 5 Q6 2 11 5 V11 Q6 9 2 11 Z" fill="#111"/><path d="M2.5 5 Q6 2.5 10.5 5 L10 6.5 Q6 4.5 2.5 6.5 Z" fill="#f0e020"/></g></svg><div class="t" style="left:342px;top:23.5px;font-size:9.1px;color:#3c3c3c">Part</div>
<div class="t" style="left:42px;top:69px;font-size:9.3px;color:#3c3c3c">Combo View</div>
<svg class="a" style="left:323px;top:69px" width="20" height="9" viewBox="0 0 20 9">
  <rect x="0.5" y="0.5" width="7.5" height="7.5" rx="2" fill="#b9b8b5" stroke="#a8a7a4"/>
  <rect x="2.2" y="2.2" width="4" height="4" fill="none" stroke="#f0efed" stroke-width="1"/>
  <rect x="11.5" y="0.5" width="7.5" height="7.5" rx="2" fill="#b9b8b5" stroke="#a8a7a4"/>
  <path d="M13.3 2.3 L17.2 6.2 M17.2 2.3 L13.3 6.2" stroke="#3a3a3a" stroke-width="1.1"/>
</svg>
<!-- tabs -->
<div class="a" style="left:77px;top:82px;width:32px;height:17px;border:1px solid #d3d2cf;border-bottom:none;border-radius:3px 3px 0 0;background:linear-gradient(#f2f1f0,#e3e2df)"></div>
<div class="a" style="left:42px;top:80px;width:36px;height:20px;border:1px solid #d3d2cf;border-bottom:none;border-radius:3px 3px 0 0;background:#f6f5f4"></div>
<div class="t" style="left:46px;top:86px;font-size:9.5px;color:#3c3c3c">Model</div>
<div class="t" style="left:82px;top:86px;font-size:9.1px;color:#3c3c3c;letter-spacing:-0.3px">Tasks</div>
<!-- pane frame -->
<div class="a" style="left:42px;top:98px;width:300px;height:290px;border:1px solid #d6d5d2;border-radius:2px;background:#f2f1f0"></div>
<div class="a" style="left:43px;top:99px;width:298px;height:288px;background:#ffffff"></div>
<div class="a" style="left:43px;top:99px;width:273px;height:17px;background:linear-gradient(#fbfbfa,#ecebe9);border-right:1px solid #dcdbd8;border-bottom:1px solid #d2d1ce"></div>
<div class="a" style="left:316px;top:99px;width:25px;height:17px;background:#f1f0ee;border-bottom:1px solid #d2d1ce"></div>
<div class="t" style="left:45px;top:104px;font-size:9.45px;color:#3c3c3c">Labels &amp; Attributes</div>
<div class="t" style="left:44.5px;top:117px;font-size:9.5px;color:#3c3c3c">Application</div>
<svg class="a" style="left:46px;top:129px" width="22" height="10" viewBox="0 0 22 10">
  <path d="M1.5 2.5 H6.5 L4 6 Z" fill="#4a4a4a"/>
  <path d="M12.5 0.5 H17.5 L19.5 2.5 V9.5 H12.5 Z" fill="#fafafa" stroke="#9a9a9a" stroke-width="0.9"/>
  <rect x="13.5" y="6" width="3" height="1.5" fill="#2ab0b0"/><rect x="16" y="6.5" width="3" height="1.5" fill="#d030c0"/>
  <path d="M14 2.5H16.5M14 4H17.5" stroke="#b0b0b0" stroke-width="0.7"/>
</svg>
<div class="t" style="left:71px;top:130px;font-size:9.06px;font-weight:bold;color:#3c3c3c">Renacuajo-wheel-small-rounded-horn-assembly</div>
<svg class="a" style="left:59px;top:141px" width="22" height="10" viewBox="0 0 22 10">
  <path d="M1.5 2 V7 L5 4.5 Z" fill="#555"/>
  <path d="M11.5 2.5 L13.5 1 H19 V7 L17 8.5 H11.5 Z" fill="#1030e0"/>
  <path d="M11.5 2.5 H17 V8.5 M17 2.5 L19 1" stroke="#061a80" stroke-width="0.8" fill="none"/>
  <path d="M11.5 2.5 L13.5 1 H19 V7 L17 8.5 H11.5 Z" fill="none" stroke="#061a80" stroke-width="0.8"/>
</svg>
<div class="t" style="left:84px;top:142px;font-size:9.08px;font-weight:bold;color:#3c3c3c">Renacuajo-wheel-small-rounded-horn-assembly-final</div>
<!-- splitter dots -->
<div class="a" style="left:189px;top:389px;width:6px;height:1px;border-top:1px dotted #b8b7b4"></div>
<!-- property view -->
<div class="a" style="left:42px;top:391px;width:300px;height:320px;border:1px solid #d6d5d2;border-radius:2px;background:#ffffff"></div>
<div class="a" style="left:43px;top:392px;width:63px;height:17px;background:linear-gradient(#fbfbfa,#ecebe9);border-right:1px solid #dcdbd8;border-bottom:1px solid #d2d1ce"></div>
<div class="a" style="left:106px;top:392px;width:235px;height:17px;background:linear-gradient(#fbfbfa,#ecebe9);border-bottom:1px solid #d2d1ce"></div>
<div class="t" style="left:46.5px;top:397px;font-size:9.5px;color:#3c3c3c">Property</div>
<div class="t" style="left:109px;top:397px;font-size:9.3px;color:#3c3c3c">Value</div>
<!-- bottom View/Data tabs -->
<div class="a" style="left:42px;top:710px;width:300px;height:21px;background:#f2f1f0;border-top:1px solid #c9c8c5;border-bottom:1px solid #cfcecb"></div>
<svg class="a" style="left:41px;top:710px" width="64" height="21" viewBox="41 710 64 21">
  <path d="M72.7 710.5 L78.8 727.8 Q79.5 729.5 81.5 729.5 H95 Q97 729.5 97.6 727.8 L101.7 710.5" fill="#f0efed" stroke="#8a8987" stroke-width="0.8"/>
  <path d="M42 710.5 L48 727.8 Q48.7 729.5 50.7 729.5 H66 Q68 729.5 68.6 727.8 L72.7 710.5" fill="#ffffff" stroke="#8a8987" stroke-width="0.8"/>
</svg>
<div class="t" style="left:47px;top:716px;font-size:9.3px;color:#3c3c3c">View</div>
<div class="t" style="left:78px;top:716px;font-size:9.3px;color:#3c3c3c">Data</div>

<div class="frame" style="left:347px;top:65px;width:427px;height:323px"><div class="tb">
  <div class="ttl" style="left:90px">Renacuajo-wheel-small-rounded-horn-assembly : 4</div>
  <div class="wb" style="left:385px"><i class="gm"></i></div><div class="wb" style="left:397px"><i class="gx"></i></div><div class="wb" style="left:409px"><svg class="gc" width="9" height="9" viewBox="0 0 9 9"><path d="M1.5 1.5 L7.5 7.5 M7.5 1.5 L1.5 7.5" stroke="currentColor" stroke-width="1.4"/></svg></div>
</div></div>
<div class="vp" style="left:349px;top:80px;width:422px;height:305px"></div>
<div class="frame" style="left:774px;top:65px;width:426px;height:323px"><div class="tb">
  <div class="ttl" style="left:90px">Renacuajo-wheel-small-rounded-horn-assembly : 3</div>
  <div class="wb" style="left:385px"><i class="gm"></i></div><div class="wb" style="left:397px"><i class="gx"></i></div><div class="wb" style="left:409px"><svg class="gc" width="9" height="9" viewBox="0 0 9 9"><path d="M1.5 1.5 L7.5 7.5 M7.5 1.5 L1.5 7.5" stroke="currentColor" stroke-width="1.4"/></svg></div>
</div></div>
<div class="vp" style="left:776px;top:80px;width:422px;height:305px"></div>
<div class="frame" style="left:347px;top:388px;width:427px;height:322px"><div class="tb">
  <div class="ttl" style="left:90px">Renacuajo-wheel-small-rounded-horn-assembly : 2</div>
  <div class="wb" style="left:385px"><i class="gm"></i></div><div class="wb" style="left:397px"><i class="gx"></i></div><div class="wb" style="left:409px"><svg class="gc" width="9" height="9" viewBox="0 0 9 9"><path d="M1.5 1.5 L7.5 7.5 M7.5 1.5 L1.5 7.5" stroke="currentColor" stroke-width="1.4"/></svg></div>
</div></div>
<div class="vp" style="left:349px;top:403px;width:422px;height:305px"></div>
<div class="frame" style="left:774px;top:388px;width:426px;height:322px"><div class="tb act">
  <div class="ttl" style="left:90px">Renacuajo-wheel-small-rounded-horn-assembly : 1</div>
  <div class="wb" style="left:385px"><i class="gm"></i></div><div class="wb" style="left:397px"><i class="gx"></i></div><div class="wb" style="left:409px"><svg class="gc" width="9" height="9" viewBox="0 0 9 9"><path d="M1.5 1.5 L7.5 7.5 M7.5 1.5 L1.5 7.5" stroke="currentColor" stroke-width="1.4"/></svg></div>
</div></div>
<div class="vp" style="left:776px;top:403px;width:422px;height:305px"></div>
<svg class="a" style="left:350.5px;top:67px" width="10.5" height="10.5" viewBox="0 0 12 12"><use href="#fcico"/></svg>
<svg class="a" style="left:777.5px;top:67px" width="10.5" height="10.5" viewBox="0 0 12 12"><use href="#fcico"/></svg>
<svg class="a" style="left:350.5px;top:390px" width="10.5" height="10.5" viewBox="0 0 12 12"><use href="#fcico"/></svg>
<svg class="a" style="left:777.5px;top:390px" width="10.5" height="10.5" viewBox="0 0 12 12"><use href="#fcico"/></svg>

<svg class="a" style="left:349px;top:80px" width="422" height="305" viewBox="349 80 422 305"><circle cx="560.5" cy="232.6" r="108" fill="#0b0b0d"/><circle cx="560.5" cy="232.6" r="103.6" fill="#09b009"/><ellipse cx="560.3" cy="201.3" rx="15.3" ry="14.6" fill="#09b009" stroke="#1a1a1a" stroke-width="1.3" /><ellipse cx="560.3" cy="263.8" rx="15.3" ry="14.6" fill="#09b009" stroke="#1a1a1a" stroke-width="1.3" /><circle cx="560.2" cy="232.5" r="40.2" fill="#464646" stroke="#151515" stroke-width="1.1"/><circle cx="547.2" cy="204.5" r="3.2" fill="#09b009" stroke="#1a1a1a" stroke-width="0.6"/><circle cx="573.2" cy="204.5" r="3.2" fill="#09b009" stroke="#1a1a1a" stroke-width="0.6"/><circle cx="547.2" cy="261.2" r="3.2" fill="#09b009" stroke="#1a1a1a" stroke-width="0.6"/><circle cx="573.2" cy="261.2" r="3.2" fill="#09b009" stroke="#1a1a1a" stroke-width="0.6"/><circle cx="531.8" cy="219.3" r="2.9" fill="#09b009" stroke="#1a1a1a" stroke-width="0.6"/><circle cx="531.8" cy="232.6" r="2.9" fill="#09b009" stroke="#1a1a1a" stroke-width="0.6"/><circle cx="531.8" cy="245.9" r="2.9" fill="#09b009" stroke="#1a1a1a" stroke-width="0.6"/><circle cx="588.8" cy="219.3" r="2.9" fill="#09b009" stroke="#1a1a1a" stroke-width="0.6"/><circle cx="588.8" cy="232.6" r="2.9" fill="#09b009" stroke="#1a1a1a" stroke-width="0.6"/><circle cx="588.8" cy="245.9" r="2.9" fill="#09b009" stroke="#1a1a1a" stroke-width="0.6"/><circle cx="560.2" cy="232.6" r="16.6" fill="#3c3c3c" stroke="#1c1c1c" stroke-width="0.9"/><circle cx="560.2" cy="232.6" r="13" fill="none" stroke="#222" stroke-width="0.8"/><circle cx="560.2" cy="232.6" r="9.5" fill="#444" stroke="#262626" stroke-width="0.8"/><circle cx="560.2" cy="232.6" r="5.4" fill="#6c6c94"/><circle cx="560.2" cy="204.5" r="12.4" fill="#d9d9d9" stroke="#2a2a2a" stroke-width="0.9"/><circle cx="560.2" cy="204.5" r="8.6" fill="#9c9c9c" stroke="#333" stroke-width="0.8"/><circle cx="560.2" cy="204.5" r="6.6" fill="#dedede" stroke="#444" stroke-width="0.6"/><path d="M555.7,204.5 L559.0,203.3 L560.2,200.0 L561.4000000000001,203.3 L564.7,204.5 L561.4000000000001,205.7 L560.2,209.0 L559.0,205.7 Z" fill="#f4f4f4" stroke="#222" stroke-width="0.7"/><circle cx="560.2" cy="261.2" r="12.4" fill="#d9d9d9" stroke="#2a2a2a" stroke-width="0.9"/><circle cx="560.2" cy="261.2" r="8.6" fill="#9c9c9c" stroke="#333" stroke-width="0.8"/><circle cx="560.2" cy="261.2" r="6.6" fill="#dedede" stroke="#444" stroke-width="0.6"/><path d="M555.7,261.2 L559.0,260.0 L560.2,256.7 L561.4000000000001,260.0 L564.7,261.2 L561.4000000000001,262.4 L560.2,265.7 L559.0,262.4 Z" fill="#f4f4f4" stroke="#222" stroke-width="0.7"/><path d="M756.2 370.6 V361" stroke="#1e8a1e" stroke-width="1.4"/><path d="M754.5 364 L756.2 360 L757.9 364 Z" fill="#1e8a1e"/><path d="M756.2 370.6 H765" stroke="#b01818" stroke-width="1.4"/><path d="M763 368.8 L767 370.6 L763 372.4 Z" fill="#b01818"/><circle cx="756.2" cy="370.6" r="1.2" fill="#1010a0"/><text x="758" y="361" font-size="6.5" font-family="Liberation Sans" fill="#222">Y</text><text x="757.5" y="370" font-size="6.5" font-family="Liberation Sans" fill="#222">Z</text><text x="767.5" y="371" font-size="6.5" font-family="Liberation Sans" fill="#222">X</text></svg>
<svg class="a" style="left:776px;top:80px" width="422" height="305" viewBox="776 80 422 305"><defs><linearGradient id="band3" x1="0" x2="1"><stop offset="0" stop-color="#075a07"/><stop offset="0.25" stop-color="#0a8a0a"/><stop offset="0.75" stop-color="#0a8e0a"/><stop offset="1" stop-color="#064806"/></linearGradient><linearGradient id="band3b" x1="0" x2="1"><stop offset="0" stop-color="#075a07"/><stop offset="0.25" stop-color="#0a940a"/><stop offset="0.75" stop-color="#0a940a"/><stop offset="1" stop-color="#064806"/></linearGradient></defs><path d="M860.6,241.7 L860.6,241.7 A126,73 0 0 0 1112.6,241.7 L1112.6,241.7 A126,73 0 0 0 860.6,241.7 Z" fill="url(#band3)" stroke="#141414" stroke-width="0.9"/><ellipse cx="986.6" cy="228.3" rx="131.8" ry="79" fill="#0e0c0f" stroke="#0a0a0a" stroke-width="0.6" /><path d="M856 232 A131 77 0 0 0 1117 232" fill="none" stroke="#262626" stroke-width="0.6"/><ellipse cx="986.6" cy="222.6" rx="126" ry="73" fill="url(#band3b)" stroke="#141414" stroke-width="0.9" /><ellipse cx="986.6" cy="215" rx="126" ry="73" fill="#0c7c0c" stroke="#141414" stroke-width="0.9" /><path d="M1076.5 266 V274 M1076.5 286 V293" stroke="#1a1a1a" stroke-width="0.7"/><defs><linearGradient id="wall3" x1="0" x2="1"><stop offset="0" stop-color="#054a05"/><stop offset="0.35" stop-color="#0b8a0b"/><stop offset="0.7" stop-color="#0b8a0b"/><stop offset="1" stop-color="#066006"/></linearGradient></defs><path d="M938 215 A48.5 27.8 0 0 1 1005 188.9 Q1026 190 1032 200 Q1035.5 206 1035.5 215 L1035.5 222 A48.7 21.5 0 0 1 938 222 Z" fill="url(#wall3)" stroke="#151515" stroke-width="0.9"/><path d="M940 221.7 A47 21.6 0 0 1 1034 221.7 A47 21.6 0 0 1 940 221.7 Z" fill="#353535" stroke="#1c1c1c" stroke-width="0.6"/><path d="M951.5 197.5 V206 M1005 189 V200" stroke="#161616" stroke-width="0.8"/><ellipse cx="974.5" cy="206" rx="3.6" ry="2.6" fill="#383838" stroke="#1a1a1a" stroke-width="0.7" /><ellipse cx="962" cy="213" rx="3.6" ry="2.6" fill="#383838" stroke="#1a1a1a" stroke-width="0.7" /><ellipse cx="950" cy="219.5" rx="3.6" ry="2.6" fill="#383838" stroke="#1a1a1a" stroke-width="0.7" /><ellipse cx="987" cy="228" rx="20.5" ry="11.5" fill="#333" stroke="#1e1e1e" stroke-width="0.8" /><ellipse cx="987" cy="228.5" rx="15" ry="8.5" fill="#3a3a3a" stroke="#1e1e1e" stroke-width="0.7" /><ellipse cx="987" cy="229" rx="6.5" ry="4" fill="#2a2a2a" stroke="#1e1e1e" stroke-width="0.5" /><defs><radialGradient id="dome" cx="0.45" cy="0.65" r="0.7"><stop offset="0" stop-color="#f0f0f0"/><stop offset="1" stop-color="#b0b0b0"/></radialGradient></defs><ellipse cx="1011.7" cy="211.2" rx="15.5" ry="9.8" fill="#a6a6a6" stroke="#262626" stroke-width="0.7" /><ellipse cx="1011.2" cy="210.2" rx="11" ry="7.6" fill="url(#dome)" stroke="#303030" stroke-width="0.7" /><ellipse cx="1011.2" cy="207.2" rx="5" ry="3.4" fill="#2c2c2c" stroke="#1a1a1a" stroke-width="0.7" /><circle cx="1011.2" cy="206.89999999999998" r="1.4" fill="#e8e8e8"/><path d="M1015.7 209.2 L1019.7 215.2" stroke="#444" stroke-width="0.6"/><clipPath id="hc3"><path d="M938 222 A48.7 21.5 0 0 0 1035.5 222 L1035.5 190 L938 190 Z"/></clipPath><g clip-path="url(#hc3)"><ellipse cx="961.5" cy="237" rx="15.5" ry="9.8" fill="#a6a6a6" stroke="#262626" stroke-width="0.7" /><ellipse cx="961.0" cy="236" rx="11" ry="7.6" fill="url(#dome)" stroke="#303030" stroke-width="0.7" /><ellipse cx="961.0" cy="233" rx="5" ry="3.4" fill="#2c2c2c" stroke="#1a1a1a" stroke-width="0.7" /><circle cx="961.0" cy="232.7" r="1.4" fill="#e8e8e8"/><path d="M965.5 235 L969.5 241" stroke="#444" stroke-width="0.6"/></g><path d="M1182.6 370.2 V362" stroke="#1818a0" stroke-width="1.4"/><path d="M1180.9 365 L1182.6 360.5 L1184.3 365 Z" fill="#1818a0"/><path d="M1182.6 370.2 L1188.5 367" stroke="#1e8a1e" stroke-width="1.5"/><path d="M1182.6 370.2 L1190.8 375.6" stroke="#b01818" stroke-width="1.5"/><text x="1183.5" y="361" font-size="6.5" font-family="Liberation Sans" fill="#222">Z</text><text x="1189.8" y="367.5" font-size="6.5" font-family="Liberation Sans" fill="#222">Y</text><text x="1192.5" y="376.5" font-size="6.5" font-family="Liberation Sans" fill="#222">X</text></svg>
<svg class="a" style="left:349px;top:403px" width="422" height="305" viewBox="349 403 422 305"><defs><linearGradient id="gband" x1="0" x2="1"><stop offset="0" stop-color="#065806"/><stop offset="0.12" stop-color="#09a509"/><stop offset="0.5" stop-color="#0ab20a"/><stop offset="0.88" stop-color="#09a509"/><stop offset="1" stop-color="#065806"/></linearGradient><linearGradient id="ghub" x1="0" x2="1"><stop offset="0" stop-color="#1e1e1e"/><stop offset="0.3" stop-color="#3e3e3e"/><stop offset="0.7" stop-color="#3e3e3e"/><stop offset="1" stop-color="#1e1e1e"/></linearGradient></defs><rect x="457" y="538" width="207.5" height="27.5" fill="url(#gband)" stroke="#1a1a1a" stroke-width="0.9"/><rect x="453" y="546.3" width="214.7" height="10.5" rx="5.2" fill="#0c0b0d"/><rect x="543.7" y="565.5" width="33.6" height="7" fill="url(#ghub)" stroke="#1a1a1a" stroke-width="0.7"/><rect x="556" y="566.5" width="7.5" height="4.5" fill="#d8d8d8"/><path d="M756.2 693.2 V684" stroke="#1818a0" stroke-width="1.4"/><path d="M754.5 687 L756.2 682.4 L757.9 687 Z" fill="#1818a0"/><path d="M756.2 693.2 H765" stroke="#b01818" stroke-width="1.4"/><path d="M763 691.4 L767 693.2 L763 695 Z" fill="#b01818"/><text x="757.5" y="683.5" font-size="6.5" font-family="Liberation Sans" fill="#222">Z</text><text x="757.5" y="693" font-size="6.5" font-family="Liberation Sans" fill="#222">Y</text><text x="767.5" y="693.5" font-size="6.5" font-family="Liberation Sans" fill="#222">X</text></svg>
<svg class="a" style="left:776px;top:403px" width="422" height="305" viewBox="776 403 422 305"><defs><linearGradient id="band1" x1="0" x2="1"><stop offset="0" stop-color="#075a07"/><stop offset="0.25" stop-color="#0a8a0a"/><stop offset="0.75" stop-color="#0a8e0a"/><stop offset="1" stop-color="#064806"/></linearGradient></defs><path d="M856.0,567.4 L856.0,567.4 A130.5,87 0 0 0 1117.0,567.4 L1117.0,567.4 A130.5,87 0 0 0 856.0,567.4 Z" fill="url(#band1)" stroke="#141414" stroke-width="0.9"/><ellipse cx="986.5" cy="556" rx="136.7" ry="91.3" fill="#0e0c0f" stroke="#0a0a0a" stroke-width="0.6" /><path d="M851 560 A135.5 88 0 0 0 1122 560" fill="none" stroke="#262626" stroke-width="0.6"/><ellipse cx="986.5" cy="550.1" rx="130.5" ry="87" fill="url(#band1)" stroke="#141414" stroke-width="0.9" /><ellipse cx="986.5" cy="542.9" rx="130.5" ry="87" fill="#0c870c" stroke="#141414" stroke-width="0.9" /><path d="M951 626.6 V634 M951 636 V644 M951 644.5 V651.5" stroke="#1a1a1a" stroke-width="0.7"/><defs><linearGradient id="hubs" x1="0" x2="1"><stop offset="0" stop-color="#2a2a2a"/><stop offset="0.5" stop-color="#3a3a3a"/><stop offset="1" stop-color="#2c2c2c"/></linearGradient></defs><path d="M964.5,535.3 L964.5,544.3 A22,14 0 0 0 1008.5,544.3 L1008.5,535.3 A22,14 0 0 0 964.5,535.3 Z" fill="url(#hubs)" stroke="#151515" stroke-width="0.9"/><ellipse cx="986.5" cy="535.3" rx="22" ry="14" fill="#3b3b3b" stroke="#151515" stroke-width="0.8" /><ellipse cx="986.5" cy="535.5" rx="13.8" ry="9.3" fill="#2f2f2f" stroke="#1a1a1a" stroke-width="0.8" /><path d="M975 540 A12 6 0 0 1 998 540" fill="none" stroke="#1e1e1e" stroke-width="0.7"/><path d="M980.5 549 V558" stroke="#181818" stroke-width="0.7"/><path d="M946.2,531.8 L946.2,537.3 A5.8,3.9 0 0 0 957.8,537.3 L957.8,531.8 A5.8,3.9 0 0 0 946.2,531.8 Z" fill="#a9a9a9" stroke="#1a1a1a" stroke-width="0.8"/><ellipse cx="952" cy="531.8" rx="5.8" ry="3.9" fill="#d4d4d4" stroke="#1a1a1a" stroke-width="0.8" /><path d="M950.5 535.3 V540.8" stroke="#222" stroke-width="0.6"/><path d="M1015.3000000000001,543.6 L1015.3000000000001,549.4 A5.8,3.9 0 0 0 1026.9,549.4 L1026.9,543.6 A5.8,3.9 0 0 0 1015.3000000000001,543.6 Z" fill="#a9a9a9" stroke="#1a1a1a" stroke-width="0.8"/><ellipse cx="1021.1" cy="543.6" rx="5.8" ry="3.9" fill="#d4d4d4" stroke="#1a1a1a" stroke-width="0.8" /><path d="M1019.6 547.1 V552.9" stroke="#222" stroke-width="0.6"/><path d="M1182 692.8 L1173 691.2" stroke="#1e8a1e" stroke-width="1.4"/><path d="M1182 692.8 L1179.2 700" stroke="#b01818" stroke-width="1.4"/><path d="M1182 692.8 L1181.5 699" stroke="#1818a0" stroke-width="1.2"/><text x="1174.5" y="691" font-size="6.5" font-family="Liberation Sans" fill="#222">Y</text><text x="1183.5" y="700" font-size="6.5" font-family="Liberation Sans" fill="#222">Z</text><text x="1179.5" y="703.5" font-size="6" font-family="Liberation Sans" fill="#222">X</text></svg>
<svg width="0" height="0" style="position:absolute">
  <defs>
    <g id="fcico">
      <path d="M0 0.5 H5.5 V2.8 H2.4 V4.2 H4.6 V6.4 H2.4 V9.5 H0 Z" fill="#e8220c"/>
      <path d="M6.3 2.2 L7.4 2.2 L7.7 3.3 L8.7 3.7 L9.6 3 L10.4 3.8 L9.8 4.8 L10.2 5.8 L11.3 6 V7.1 L10.2 7.4 L9.8 8.4 L10.4 9.3 L9.6 10.1 L8.7 9.5 L7.7 9.9 L7.4 11 H6.3 L6 9.9 L5 9.5 L4.1 10.1 L3.3 9.3 L3.9 8.4 L3.5 7.4 L2.4 7.1 V6 L3.5 5.8 L3.9 4.8 L3.3 3.8 L4.1 3 L5 3.7 L6 3.3 Z" fill="#1030a8"/>
      <circle cx="6.85" cy="6.6" r="1.4" fill="#dfe6ff"/>
    </g>
  </defs>
</svg>
<!-- tab bar -->
<div class="a" style="left:346px;top:710px;width:854px;height:1px;background:#a8a7a4"></div>
<div class="a" style="left:347px;top:729px;width:853px;height:2px;background:#dcdbd8"></div>
<div class="a" style="left:596px;top:711px;width:250px;height:18px;border:1px solid #d2d1ce;border-top:none;border-radius:0 0 3px 3px;background:linear-gradient(#e9e8e6,#efeeec)"></div>
<div class="a" style="left:846px;top:711px;width:250px;height:18px;border:1px solid #d2d1ce;border-top:none;border-radius:0 0 3px 3px;background:linear-gradient(#e9e8e6,#efeeec)"></div>
<div class="a" style="left:1096px;top:711px;width:104px;height:18px;border:1px solid #d2d1ce;border-top:none;border-radius:0 0 3px 3px;background:linear-gradient(#e9e8e6,#efeeec);overflow:hidden"></div>
<div class="a" style="left:347px;top:710px;width:249px;height:21px;border:1px solid #cfcecb;border-top:none;border-radius:0 0 3px 3px;background:#f7f7f6"></div>
<svg class="a" style="left:351px;top:716px" width="10.5" height="10.5" viewBox="0 0 12 12"><use href="#fcico"/></svg>
<div class="t" style="left:366px;top:717px;font-size:9.16px;color:#3c3c3c">Renacuajo-wheel-small-rounded-horn-assembly : 1</div>
<svg class="a" style="left:580px;top:716px" width="10" height="10" viewBox="0 0 10 10"><path d="M2.2 2.2 L7.8 7.8 M7.8 2.2 L2.2 7.8" stroke="#5c5c5c" stroke-width="2.5" stroke-linecap="round"/><circle cx="5" cy="5" r="1.5" fill="#6a6a6a"/></svg>
<svg class="a" style="left:601px;top:715px" width="10.5" height="10.5" viewBox="0 0 12 12"><use href="#fcico"/></svg>
<div class="t" style="left:616px;top:716.5px;font-size:9.16px;color:#3c3c3c">Renacuajo-wheel-small-rounded-horn-assembly : 2</div>
<svg class="a" style="left:830px;top:715px" width="10" height="10" viewBox="0 0 10 10"><path d="M2.2 2.2 L7.8 7.8 M7.8 2.2 L2.2 7.8" stroke="#5c5c5c" stroke-width="2.5" stroke-linecap="round"/><circle cx="5" cy="5" r="1.5" fill="#6a6a6a"/></svg>
<svg class="a" style="left:851px;top:715px" width="10.5" height="10.5" viewBox="0 0 12 12"><use href="#fcico"/></svg>
<div class="t" style="left:866px;top:716.5px;font-size:9.16px;color:#3c3c3c">Renacuajo-wheel-small-rounded-horn-assembly : 3</div>
<svg class="a" style="left:1080px;top:715px" width="10" height="10" viewBox="0 0 10 10"><path d="M2.2 2.2 L7.8 7.8 M7.8 2.2 L2.2 7.8" stroke="#5c5c5c" stroke-width="2.5" stroke-linecap="round"/><circle cx="5" cy="5" r="1.5" fill="#6a6a6a"/></svg>
<svg class="a" style="left:1101px;top:715px" width="10.5" height="10.5" viewBox="0 0 12 12"><use href="#fcico"/></svg>
<div class="a" style="left:1116px;top:711px;width:66px;height:18px;overflow:hidden"><div class="t" style="left:0;top:5.5px;font-size:9.16px;color:#3c3c3c">Renacuajo-wheel</div></div>
<div class="a" style="left:1181px;top:712px;width:8px;height:18px;border-radius:3px;background:linear-gradient(90deg,#f6f6f5,#e9e8e6)"></div>
<div class="a" style="left:1191px;top:712px;width:8px;height:18px;border-radius:3px;background:linear-gradient(90deg,#f6f6f5,#e9e8e6)"></div>
<svg class="a" style="left:1181px;top:712px" width="19" height="18" viewBox="0 0 19 18"><path d="M6 7 L3 9 L6 11 Z" fill="#b5b4b1"/><path d="M13.5 7 L16.5 9 L13.5 11 Z" fill="#5a5a5a"/></svg>
<!-- status -->
<div class="t" style="left:1122px;top:736.5px;font-size:9.19px;color:#3c3c3c">111.96 x 81.11 mm</div>

</body></html>
